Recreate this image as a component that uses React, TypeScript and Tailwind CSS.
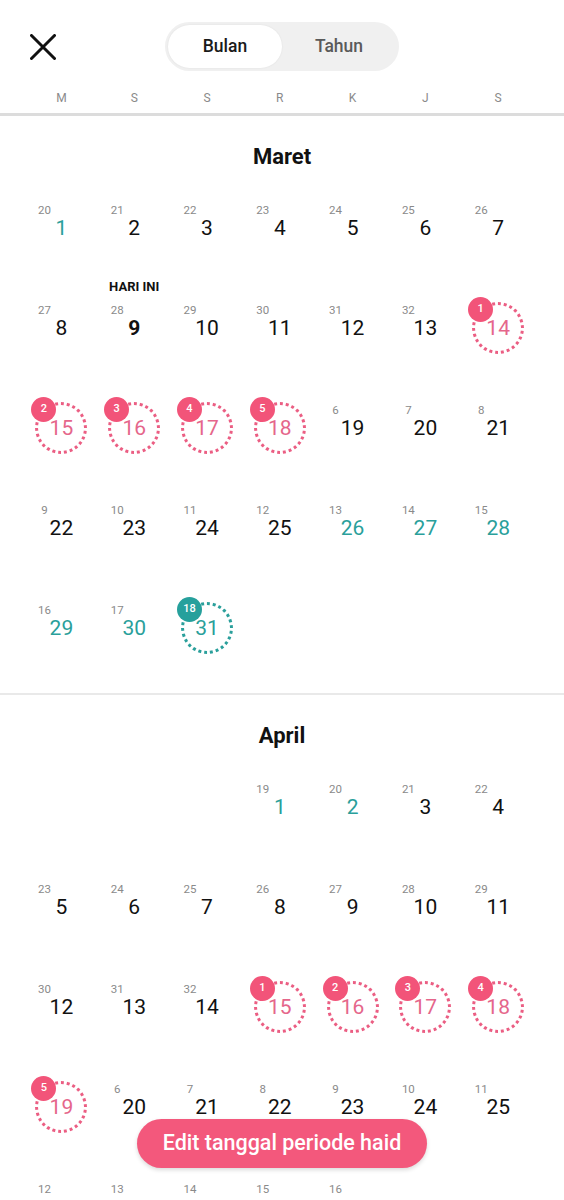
import React from 'react';

type Day = {
  d: number;
  c?: number;
  tone?: 'teal' | 'pink';
  badge?: number;
  today?: boolean;
  cut?: boolean;
} | null;

const WEEK = ['M', 'S', 'S', 'R', 'K', 'J', 'S'];

const maret: Day[] = [
  { d: 1, c: 20, tone: 'teal' }, { d: 2, c: 21 }, { d: 3, c: 22 }, { d: 4, c: 23 }, { d: 5, c: 24 }, { d: 6, c: 25 }, { d: 7, c: 26 },
  { d: 8, c: 27 }, { d: 9, c: 28, today: true }, { d: 10, c: 29 }, { d: 11, c: 30 }, { d: 12, c: 31 }, { d: 13, c: 32 }, { d: 14, tone: 'pink', badge: 1 },
  { d: 15, tone: 'pink', badge: 2 }, { d: 16, tone: 'pink', badge: 3 }, { d: 17, tone: 'pink', badge: 4 }, { d: 18, tone: 'pink', badge: 5 }, { d: 19, c: 6 }, { d: 20, c: 7 }, { d: 21, c: 8 },
  { d: 22, c: 9 }, { d: 23, c: 10 }, { d: 24, c: 11 }, { d: 25, c: 12 }, { d: 26, c: 13, tone: 'teal' }, { d: 27, c: 14, tone: 'teal' }, { d: 28, c: 15, tone: 'teal' },
  { d: 29, c: 16, tone: 'teal' }, { d: 30, c: 17, tone: 'teal' }, { d: 31, tone: 'teal', badge: 18 },
];

// April: starts on Wednesday; last row runs past the bottom of the screen
const april: Day[] = [
  null, null, null, { d: 1, c: 19, tone: 'teal' }, { d: 2, c: 20, tone: 'teal' }, { d: 3, c: 21 }, { d: 4, c: 22 },
  { d: 5, c: 23 }, { d: 6, c: 24 }, { d: 7, c: 25 }, { d: 8, c: 26 }, { d: 9, c: 27 }, { d: 10, c: 28 }, { d: 11, c: 29 },
  { d: 12, c: 30 }, { d: 13, c: 31 }, { d: 14, c: 32 }, { d: 15, tone: 'pink', badge: 1 }, { d: 16, tone: 'pink', badge: 2 }, { d: 17, tone: 'pink', badge: 3 }, { d: 18, tone: 'pink', badge: 4 },
  { d: 19, tone: 'pink', badge: 5 }, { d: 20, c: 6 }, { d: 21, c: 7 }, { d: 22, c: 8 }, { d: 23, c: 9 }, { d: 24, c: 10 }, { d: 25, c: 11 },
  { d: 26, c: 12, cut: true }, { d: 27, c: 13, cut: true }, { d: 28, c: 14, cut: true }, { d: 29, c: 15, cut: true }, { d: 30, c: 16, cut: true },
];

const Cell = ({ day }: { day: Day }) => {
  if (!day) return <div className="h-[100px]" />;

  if (day.badge !== undefined) {
    const teal = day.tone === 'teal';
    return (
      <div className="h-[100px] flex justify-center pt-[24px]">
        <div
          className={`relative w-[52px] h-[52px] rounded-full border-[3px] border-dotted flex items-center justify-center ${
            teal ? 'border-[#2a9f9b] text-[#2a9f9b]' : 'border-[#eb5e83] text-[#e5668b]'
          }`}
        >
          <span className="text-[21px] leading-[24px]">{day.d}</span>
          <span
            className={`absolute left-[-7px] top-[-8px] w-[25px] h-[25px] rounded-full flex items-center justify-center text-white text-[11px] font-medium ${
              teal ? 'bg-[#26a09c]' : 'bg-[#f25479]'
            }`}
          >
            {day.badge}
          </span>
        </div>
      </div>
    );
  }

  return (
    <div className="h-[100px] flex flex-col items-center pt-[3px]">
      <div className="h-[12px] text-[13px] leading-[12px] font-bold text-[#111] whitespace-nowrap">
        {day.today ? 'HARI INI' : ''}
      </div>
      <div className="mt-[11px] h-[12px] text-[11.5px] leading-[12px] text-[#8a8a8a] -translate-x-[17px]">{day.c}</div>
      {!day.cut && (
        <div
          className={`text-[21px] leading-[24px] ${day.tone === 'teal' ? 'text-[#2a9f9b]' : 'text-[#111]'} ${
            day.today ? 'font-bold' : ''
          }`}
        >
          {day.d}
        </div>
      )}
    </div>
  );
};

const Month = ({ name, days, last }: { name: string; days: Day[]; last?: boolean }) => (
  <div>
    <div className="pt-[27px] text-center text-[22px] leading-[28px] font-bold text-[#111]">{name}</div>
    <div className="mt-[7px] ml-[25px] grid grid-cols-[repeat(7,72.8px)]">
      {days.map((day, i) => (
        <Cell key={i} day={day} />
      ))}
    </div>
    {!last && (
      <>
        <div className="h-[15px]" />
        <div className="h-[2px] bg-[#e9e9e9]" />
      </>
    )}
  </div>
);

export default function App() {
  return (
    <div className="relative h-[1200px] overflow-hidden bg-white font-['Roboto',sans-serif]">
      {/* top bar */}
      <div className="pt-[22px] grid grid-cols-[1fr_auto_1fr] items-center">
        <div className="pl-[30px]">
          <svg width="26" height="26" viewBox="0 0 26 26" fill="none" stroke="#111" strokeWidth="3" strokeLinecap="round">
            <path d="M1.5 1.5 L24.5 24.5 M24.5 1.5 L1.5 24.5" />
          </svg>
        </div>
        <div className="w-[234px] h-[49px] rounded-full bg-[#f0f0f0] p-[3px] flex">
          <div className="w-[114px] rounded-full bg-white shadow-[0_0_2px_rgba(0,0,0,0.08)] flex items-center justify-center text-[17.5px] font-medium text-[#1a1a1a]">
            Bulan
          </div>
          <div className="flex-1 flex items-center justify-center text-[17.5px] font-medium text-[#5a5a5a]">Tahun</div>
        </div>
        <div />
      </div>

      {/* weekday labels */}
      <div className="pt-[20px] h-[42px] ml-[25px] grid grid-cols-[repeat(7,72.8px)]">
        {WEEK.map((w, i) => (
          <div key={i} className="text-center text-[12px] leading-[14px] text-[#8a8a8a]">
            {w}
          </div>
        ))}
      </div>
      <div className="h-[3px] bg-[#dcdcdc]" />

      <Month name="Maret" days={maret} />
      <Month name="April" days={april} last />

      <button className="absolute bottom-[32px] left-1/2 -translate-x-1/2 w-[290px] h-[49px] rounded-full bg-[#f3587c] text-white text-[21.5px] font-medium shadow-[0_2px_4px_rgba(0,0,0,0.15)]">
        Edit tanggal periode haid
      </button>
    </div>
  );
}
